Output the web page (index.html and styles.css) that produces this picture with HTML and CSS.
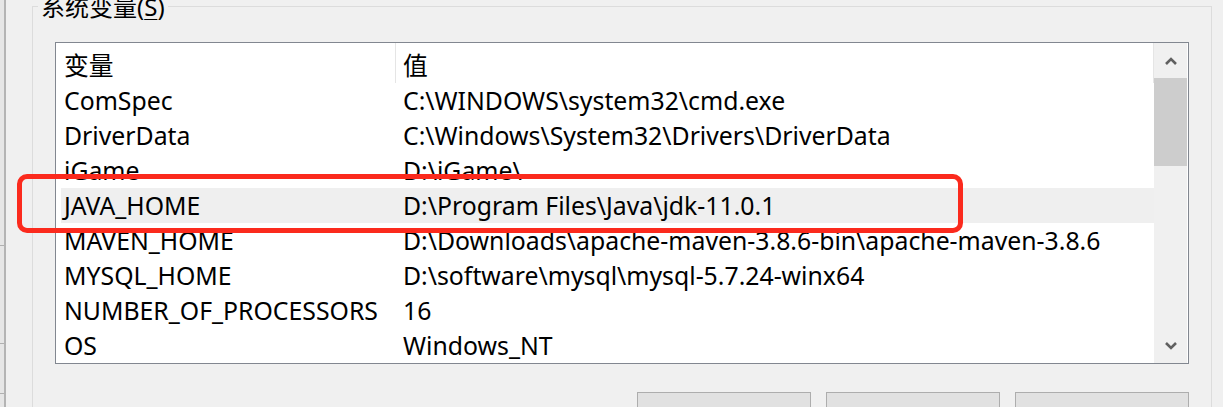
FILE: index.html
```html
<!DOCTYPE html>
<html lang="zh-CN">
<head>
<meta charset="utf-8">
<title>系统变量</title>
<link rel="stylesheet" href="styles.css">
</head>
<body>
<div class="page">
  <div class="edge">
    <div class="edge-tick t1"></div>
    <div class="edge-tick t2"></div>
    <div class="edge-tick t3"></div>
  </div>
  <div class="group">
    <div class="group-title">系统变量(<u>S</u>)</div>
    <div class="listbox">
      <div class="table">
        <div class="row head">
          <div class="c1">变量</div>
          <div class="c2">值</div>
        </div>
        <div class="row"><div class="c1">ComSpec</div><div class="c2">C:\WINDOWS\system32\cmd.exe</div></div>
        <div class="row"><div class="c1">DriverData</div><div class="c2">C:\Windows\System32\Drivers\DriverData</div></div>
        <div class="row"><div class="c1">iGame</div><div class="c2">D:\iGame\</div></div>
        <div class="row sel"><div class="c1">JAVA_HOME</div><div class="c2">D:\Program Files\Java\jdk-11.0.1</div></div>
        <div class="row"><div class="c1">MAVEN_HOME</div><div class="c2">D:\Downloads\apache-maven-3.8.6-bin\apache-maven-3.8.6</div></div>
        <div class="row"><div class="c1">MYSQL_HOME</div><div class="c2">D:\software\mysql\mysql-5.7.24-winx64</div></div>
        <div class="row"><div class="c1">NUMBER_OF_PROCESSORS</div><div class="c2">16</div></div>
        <div class="row"><div class="c1">OS</div><div class="c2">Windows_NT</div></div>
      </div>
      <div class="scrollbar">
        <div class="sb-btn">
          <svg width="12" height="8" viewBox="0 0 12 8"><path d="M1 7 L6 2 L11 7" fill="none" stroke="#606060" stroke-width="2.6"/></svg>
        </div>
        <div class="sb-thumb"></div>
        <div class="sb-track"></div>
        <div class="sb-btn">
          <svg width="12" height="8" viewBox="0 0 12 8"><path d="M1 1 L6 6 L11 1" fill="none" stroke="#606060" stroke-width="2.6"/></svg>
        </div>
      </div>
    </div>
    <div class="buttons">
      <div class="btn"></div>
      <div class="btn"></div>
      <div class="btn"></div>
    </div>
  </div>
</div>
<div class="highlight"></div>
</body>
</html>
```

FILE: styles.css
```css
html, body {
  margin: 0;
  padding: 0;
  background: #f0f0f0;
  overflow: hidden;
}
body {
  width: 1223px;
  height: 407px;
  position: relative;
  font-family: "Noto Sans", "Noto Sans CJK SC", sans-serif;
  font-size: 24.8px;
  color: #000;
}
.page {
  display: flex;
  height: 407px;
}
.edge {
  width: 4px;
  height: 407px;
  background: #e6e6e6;
  border-right: 2px solid #b4b4b4;
  position: relative;
  flex: none;
}
.edge-tick {
  position: absolute;
  left: 0;
  width: 4px;
  height: 1px;
  background: #b0b0b0;
}
.t1 { top: 245px; }
.t2 { top: 343px; }
.t3 { top: 393px; }
.group {
  position: relative;
  margin-left: 26px;
  margin-top: 6px;
  width: 1180px;
  border: 1px solid #dcdcdc;
  border-bottom: none;
  padding: 35px 24px 0 22px;
  box-sizing: border-box;
  flex: none;
}
.group-title {
  position: absolute;
  left: 5px;
  top: -15px;
  padding: 0 3px;
  background: #f0f0f0;
  font-size: 24px;
  line-height: 30px;
}
.group-title u {
  text-decoration-thickness: 1px;
  text-underline-offset: 3px;
}
.listbox {
  display: flex;
  width: 1134px;
  height: 322px;
  border: 1px solid #828790;
  background: #fff;
  box-sizing: border-box;
}
.table {
  flex: 1;
  overflow: hidden;
}
.row {
  display: flex;
  height: 35px;
  line-height: 35px;
  margin-left: 5px;
  white-space: nowrap;
}
.row.head {
  height: 40px;
  line-height: 44px;
}
.c1 {
  width: 339px;
  padding-left: 3px;
  box-sizing: border-box;
  flex: none;
}
.c2 {
  flex: 1;
  padding-left: 3px;
}
.head .c1 {
  border-right: 1px solid #e5e5e5;
  width: 335px;
  margin-right: 4px;
}
.head .c2 {
  border-right: 1px solid #e5e5e5;
}
.row.sel {
  background: #efefef;
}
.scrollbar {
  width: 33px;
  flex: none;
  display: flex;
  flex-direction: column;
  background: #f0f0f0;
  margin-right: 1px;
}
.sb-btn {
  height: 35px;
  display: flex;
  align-items: center;
  justify-content: center;
  flex: none;
}
.sb-thumb {
  height: 88px;
  background: #cdcdcd;
  flex: none;
}
.sb-track {
  flex: 1;
}
.buttons {
  display: flex;
  justify-content: flex-end;
  gap: 15px;
  width: 1134px;
  margin-top: 28px;
}
.btn {
  width: 174px;
  height: 30px;
  background: #e1e1e1;
  border: 1px solid #adadad;
  box-sizing: border-box;
}
.highlight {
  position: absolute;
  left: 17px;
  top: 174px;
  width: 946px;
  height: 59px;
  border: 5px solid #fb2a1d;
  border-radius: 10px;
  box-sizing: border-box;
}
```
